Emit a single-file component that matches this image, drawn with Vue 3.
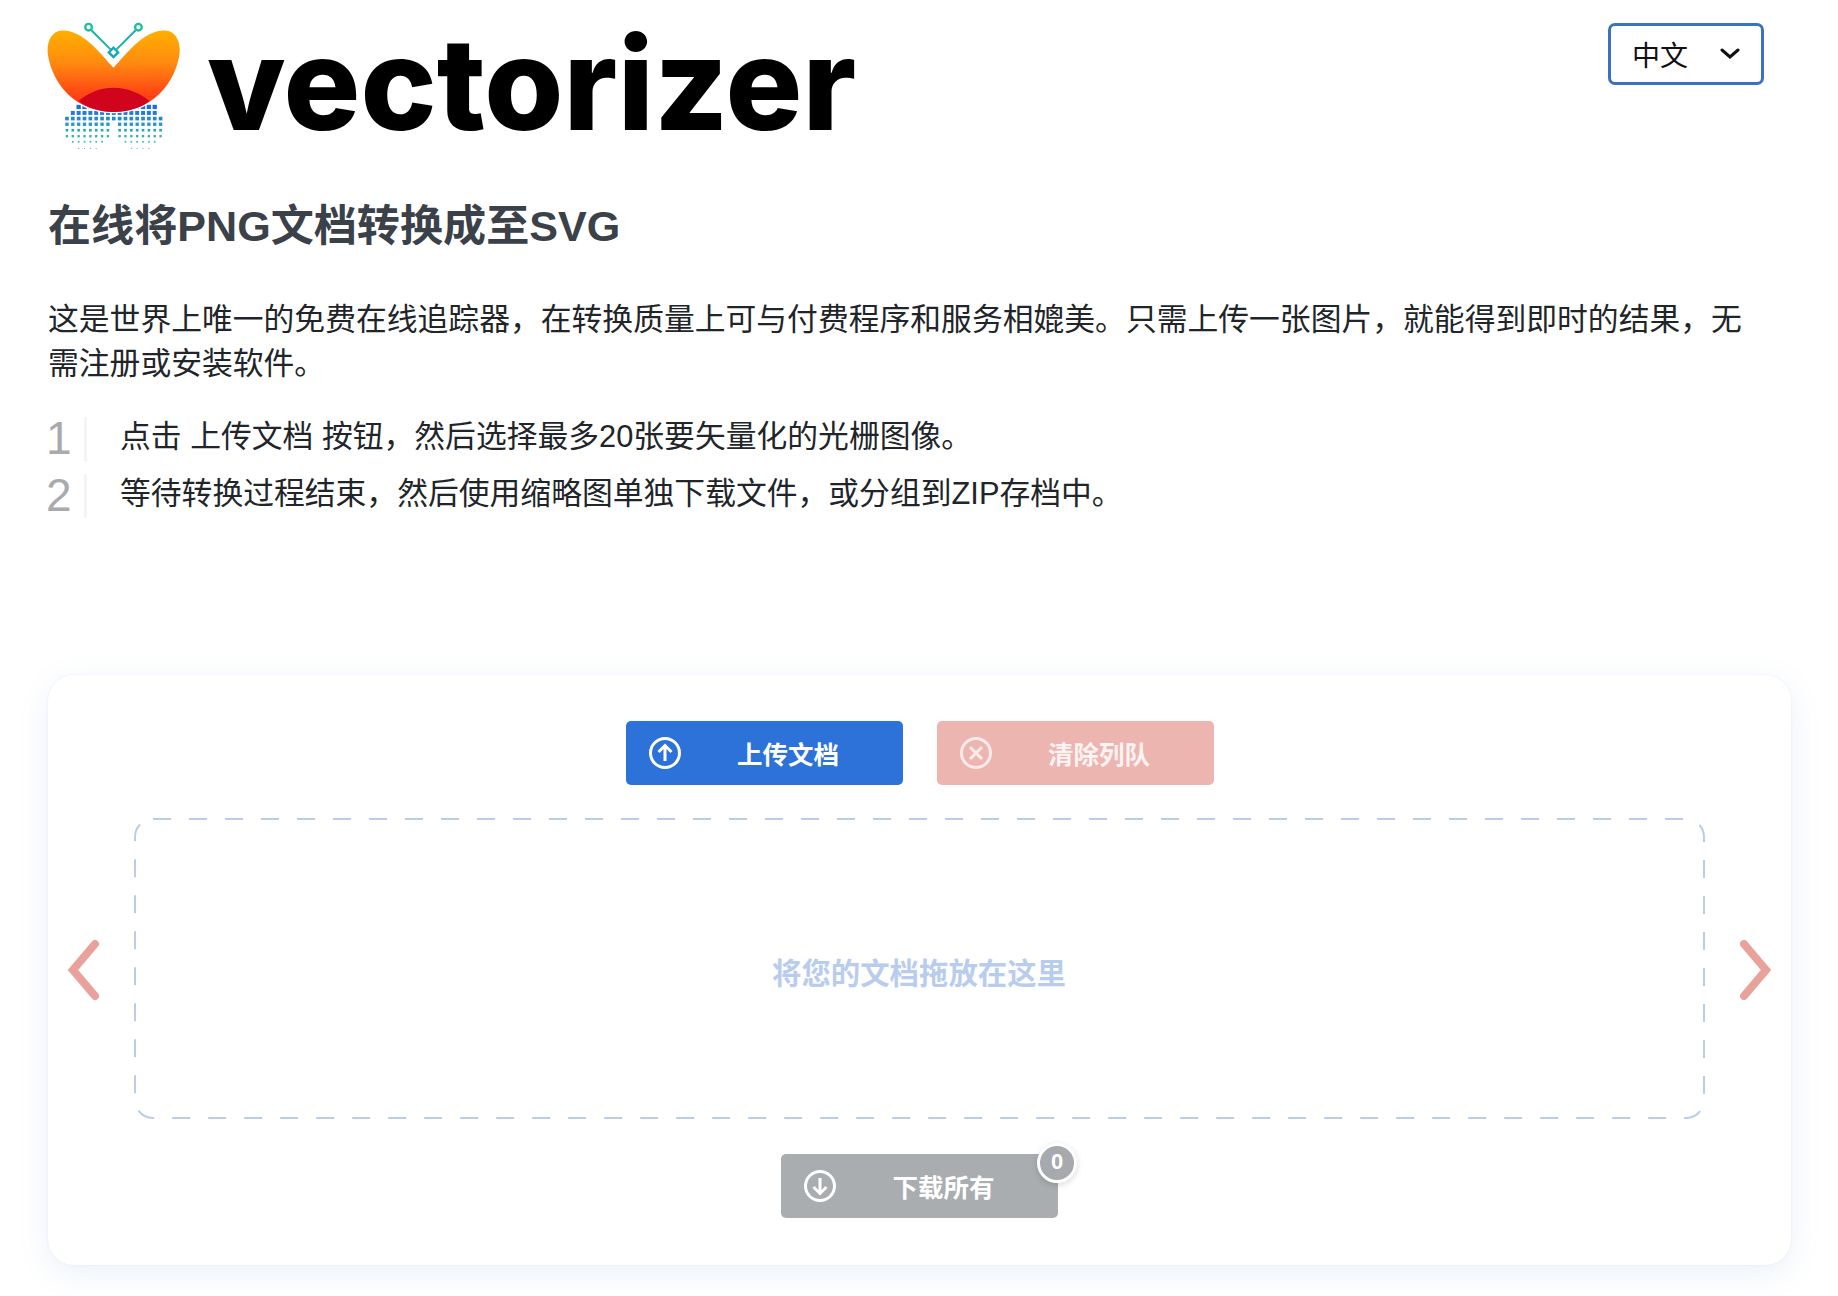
<script setup>
// halftone dots under the butterfly wings
const dots = [];
const rows = [320, 338, 355, 372, 390, 408, 425, 445];
rows.forEach((y, r) => {
  const size = [13, 12, 11, 10, 8, 7, 5, 3][r];
  const g = Math.round(110 + r * 14);
  const b = Math.round(225 - r * 10);
  for (let x = 110; x <= 392; x += 17.6) {
    const inLeft = Math.hypot(x - 172, y - 378) < 73;
    const inRight = Math.hypot(x - 330, y - 378) < 73;
    const bridge = y < 360 && x > 150 && x < 350;
    if (inLeft || inRight || bridge) {
      dots.push({ x: x - size / 2, y: y - size / 2, size, fill: `rgb(${30 + r * 3},${g},${b})` });
    }
  }
});

const steps = [
  '点击 上传文档 按钮，然后选择最多20张要矢量化的光栅图像。',
  '等待转换过程结束，然后使用缩略图单独下载文件，或分组到ZIP存档中。'
];
</script>

<template>
  <div class="page">
    <header class="top">
      <svg class="logo" viewBox="50 20 400 450" width="133" height="150">
        <defs>
          <linearGradient id="wing" x1="0" y1="90" x2="0" y2="335" gradientUnits="userSpaceOnUse">
            <stop offset="0" stop-color="#ffb000" />
            <stop offset="0.4" stop-color="#ff8a10" />
            <stop offset="0.75" stop-color="#ff4a14" />
            <stop offset="1" stop-color="#ff2a1a" />
          </linearGradient>
        </defs>
        <rect v-for="(d, i) in dots" :key="i" :x="d.x" :y="d.y" :width="d.size" :height="d.size" :fill="d.fill" />
        <path class="wing" d="M250 202C215 165 160 88 95 90C65 92 50 120 52 155C56 215 110 335 250 335C390 335 445 215 449 155C451 120 435 90 405 90C340 88 285 165 250 202Z" fill="url(#wing)" />
        <path d="M145 302C175 275 215 262 250 262C290 262 330 278 358 302C330 325 290 335 250 335C210 335 170 322 145 302Z" fill="#d0041c" />
        <path d="M182 88L241 147M318 88L259 147" fill="none" stroke="#17b3a3" stroke-width="6" />
        <circle cx="175" cy="80" r="10" fill="#fff" stroke="#1cc09a" stroke-width="7" />
        <circle cx="325" cy="80" r="10" fill="#fff" stroke="#1cc09a" stroke-width="7" />
        <path d="M250 142L264 156L250 170L236 156Z" fill="#fff" stroke="#14a9b0" stroke-width="7" />
      </svg>
      <div class="wordmark">vectorizer</div>
      <div class="lang">
        <span>中文</span>
        <svg width="20" height="12" viewBox="0 0 20 12"><path d="M2 2l8 7 8-7" fill="none" stroke="#111" stroke-width="3" stroke-linecap="round" /></svg>
      </div>
    </header>

    <h2 class="title">在线将PNG文档转换成至SVG</h2>
    <p class="intro">这是世界上唯一的免费在线追踪器，在转换质量上可与付费程序和服务相媲美。只需上传一张图片，就能得到即时的结果，无需注册或安装软件。</p>

    <ol class="steps">
      <li v-for="(step, i) in steps" :key="i">
        <span class="num">{{ i + 1 }}</span>
        <span class="step-text">{{ step }}</span>
      </li>
    </ol>

    <section class="card">
      <div class="actions">
        <button class="btn upload">
          <svg width="32" height="32" viewBox="0 0 32 32"><circle cx="16" cy="16" r="14.5" /><path d="M16 24V9M9.5 15L16 8.500L22.500 15" /></svg>
          <span>上传文档</span>
        </button>
        <button class="btn clear">
          <svg width="32" height="32" viewBox="0 0 32 32"><circle cx="16" cy="16" r="14.500" /><path d="M10 10L22 22M22 10L10 22" /></svg>
          <span>清除列队</span>
        </button>
      </div>

      <div class="stage">
        <svg class="arrow" width="36" height="62" viewBox="0 0 36 62"><path d="M28 5L6 31L28 57" /></svg>
        <div class="dropzone">
          <svg class="dash" viewBox="0 0 1571 301" width="1571" height="301">
            <rect x="1" y="1" width="1569" height="299" rx="18" />
          </svg>
          <span>将您的文档拖放在这里</span>
        </div>
        <svg class="arrow" width="36" height="62" viewBox="0 0 36 62"><path d="M9 5L31 31L9 57" /></svg>
      </div>

      <div class="bottom">
        <button class="btn download">
          <svg width="32" height="32" viewBox="0 0 32 32"><circle cx="16" cy="16" r="14.500" /><path d="M16 8V23M9.500 17L16 23.500L22.500 17" /></svg>
          <span>下载所有</span>
          <b class="badge">0</b>
        </button>
      </div>
    </section>
  </div>
</template>

<style scoped>
.page {
  height: 1296px;
  box-sizing: border-box;
  padding: 0 47px 0 48px;
  background: #fff;
  font-family: "Liberation Sans", "Noto Sans CJK SC", sans-serif;
  color: #212529;
  overflow: hidden;
}

.top {
  display: flex;
  align-items: flex-start;
  height: 162px;
}

.logo {
  margin: 7px 0 0 -1px;
  flex: none;
}

.wing {
  stroke: #fff;
  stroke-width: 8;
  paint-order: stroke;
}

.wordmark {
  margin: 5px 0 0 27px;
  font-family: Inter, "Liberation Sans", sans-serif;
  font-size: 128px;
  line-height: 158px;
  font-weight: 800;
  color: #000;
}

.lang {
  margin: 23px 27px 0 auto;
  width: 156px;
  height: 62px;
  box-sizing: border-box;
  border: 3px solid #3a72bf;
  border-radius: 7px;
  display: flex;
  align-items: center;
  justify-content: space-between;
  padding: 0 21px 0 21px;
  font-size: 28px;
  color: #111;
}

.title {
  margin: 37px 0 0;
  font-size: 43.1px;
  line-height: 54px;
  font-weight: 700;
  color: #3b4149;
}

.intro {
  margin: 45px 0 0;
  width: 1716px;
  font-size: 30.8px;
  line-height: 43.5px;
}

.steps {
  list-style: none;
  margin: 32px 0 0;
  padding: 0;
}

.steps li {
  display: flex;
  align-items: center;
  height: 44px;
  margin-bottom: 13px;
}

.num {
  width: 39px;
  height: 44px;
  box-sizing: border-box;
  border-right: 3px solid #f3f4f5;
  font-size: 46px;
  line-height: 42px;
  text-indent: -2px;
  color: #a8aaad;
}

.step-text {
  margin-left: 33px;
  font-size: 30.8px;
  line-height: 44px;
  position: relative;
  top: -2px;
}

.card {
  margin-top: 157px;
  height: 590px;
  box-sizing: border-box;
  padding: 46px 0 0;
  border-radius: 26px;
  background: #fff;
  box-shadow: 0 8px 30px rgba(90, 130, 200, 0.12), 0 0 2px rgba(90, 130, 200, 0.12);
}

.actions,
.bottom {
  display: flex;
  justify-content: center;
}

.actions {
  gap: 34px;
}

.btn {
  position: relative;
  width: 277px;
  height: 64px;
  box-sizing: border-box;
  border: 0;
  border-radius: 5px;
  padding: 0 7px 0 23px;
  display: flex;
  align-items: center;
  font-family: inherit;
  font-size: 25.5px;
  font-weight: 700;
  color: #fff;
}

.btn span {
  flex: 1;
  margin-bottom: 2px;
  text-align: center;
}

.btn svg {
  flex: none;
  fill: none;
  stroke: #fff;
  stroke-width: 3;
}

.upload {
  background: #2d72d9;
}

.clear {
  background: #ecb5b0;
  color: #fdf3f2;
}

.clear svg {
  stroke: #fbeceb;
}

.download {
  background: #a9adb0;
}

.stage {
  margin-top: 33px;
  display: flex;
  align-items: center;
  justify-content: space-between;
  padding: 0 20px 0 19px;
}

.arrow {
  flex: none;
  margin-top: 3px;
  fill: none;
  stroke: #e8a29b;
  stroke-width: 8;
  stroke-linecap: round;
}

.dropzone {
  position: relative;
  width: 1571px;
  height: 301px;
  display: flex;
  align-items: center;
  justify-content: center;
  padding-top: 4px;
  box-sizing: border-box;
  font-size: 29.4px;
  font-weight: 700;
  color: #b8cdee;
}

.dash {
  position: absolute;
  left: 0;
  top: 0;
  fill: none;
  stroke: #b9cde9;
  stroke-width: 2;
  stroke-dasharray: 18 18;
}

.bottom {
  margin-top: 35px;
}

.badge {
  position: absolute;
  top: -11px;
  right: -19px;
  width: 40px;
  height: 40px;
  box-sizing: border-box;
  border: 3px solid #fff;
  border-radius: 50%;
  background: #a6aaae;
  box-shadow: 0 2px 6px rgba(0, 0, 0, 0.15);
  font-size: 22px;
  line-height: 32px;
  text-align: center;
}
</style>
